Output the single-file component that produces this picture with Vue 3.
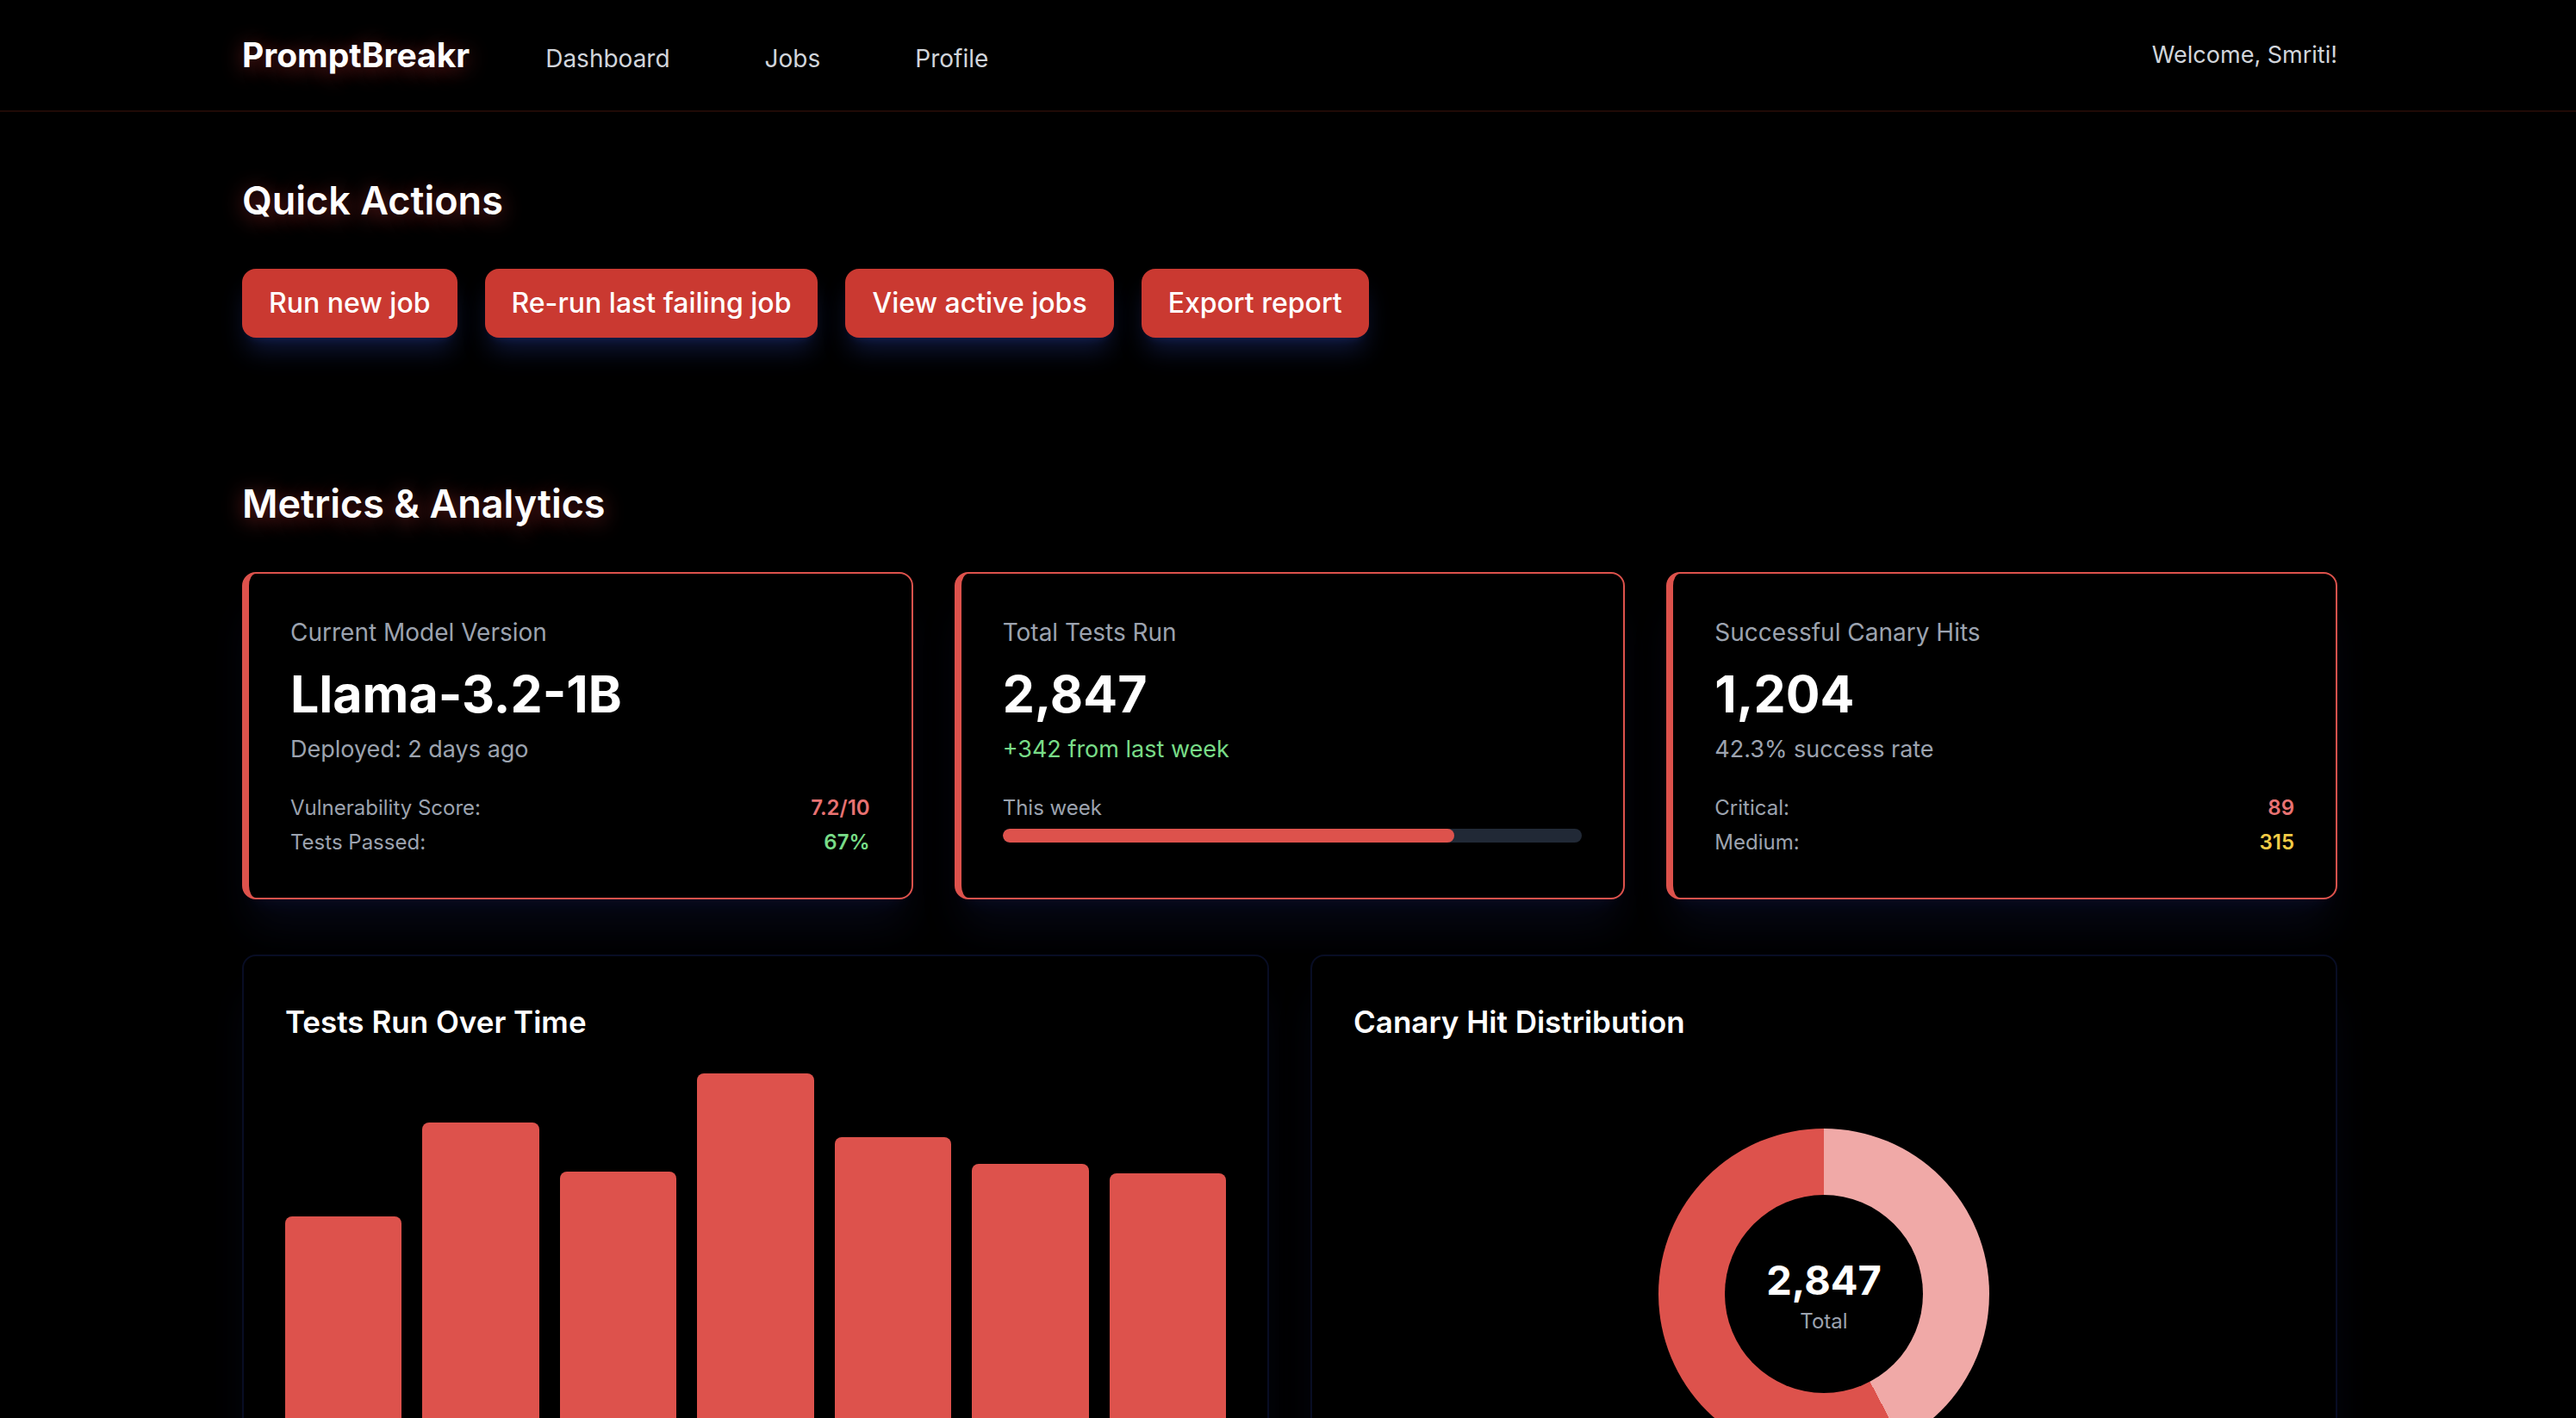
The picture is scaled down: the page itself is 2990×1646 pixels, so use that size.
<script setup>
import { ref, computed } from 'vue'

const user = ref('Smriti')

const links = [
  { label: 'Dashboard', href: '#dashboard' },
  { label: 'Jobs', href: '#jobs' },
  { label: 'Profile', href: '#profile' }
]

const actions = ['Run new job', 'Re-run last failing job', 'View active jobs', 'Export report']

const cards = ref([
  {
    title: 'Current Model Version',
    value: 'Llama-3.2-1B',
    note: 'Deployed: 2 days ago',
    rows: [
      { label: 'Vulnerability Score:', value: '7.2/10', tone: 'red' },
      { label: 'Tests Passed:', value: '67%', tone: 'green' }
    ]
  },
  {
    title: 'Total Tests Run',
    value: '2,847',
    note: '+342 from last week',
    noteTone: 'green',
    progress: 78
  },
  {
    title: 'Successful Canary Hits',
    value: '1,204',
    note: '42.3% success rate',
    rows: [
      { label: 'Critical:', value: '89', tone: 'red' },
      { label: 'Medium:', value: '315', tone: 'yellow' }
    ]
  }
])

const tests = ref([346, 455, 398, 512, 438, 407, 396])

const bars = computed(() => {
  const max = Math.max(...tests.value)
  return tests.value.map((n) => (n / max) * 100)
})

const hitRate = ref(42.3)
</script>

<template>
  <div class="page">
    <header class="topbar">
      <div class="container topbar-inner">
        <div class="topbar-left">
          <a class="brand" href="#">PromptBreakr</a>
          <nav class="links">
            <a v-for="link in links" :key="link.label" :href="link.href">{{ link.label }}</a>
          </nav>
        </div>
        <span class="welcome">Welcome, {{ user }}!</span>
      </div>
    </header>

    <main class="container content">
      <section>
        <h2 class="section-title">Quick Actions</h2>
        <div class="actions">
          <button v-for="action in actions" :key="action" type="button" class="action-btn">{{ action }}</button>
        </div>
      </section>

      <section>
        <h2 class="section-title">Metrics &amp; Analytics</h2>

        <div class="cards">
          <article v-for="card in cards" :key="card.title" class="card">
            <h3 class="card-title">{{ card.title }}</h3>
            <p class="card-value">{{ card.value }}</p>
            <p class="card-note" :class="card.noteTone">{{ card.note }}</p>

            <dl v-if="card.rows" class="rows">
              <div v-for="row in card.rows" :key="row.label" class="row">
                <dt>{{ row.label }}</dt>
                <dd :class="row.tone">{{ row.value }}</dd>
              </div>
            </dl>

            <div v-else class="rows">
              <span id="week-label" class="row">This week</span>
              <div class="track" role="progressbar" aria-labelledby="week-label" :aria-valuenow="card.progress">
                <div class="fill" :style="{ width: card.progress + '%' }"></div>
              </div>
            </div>
          </article>
        </div>

        <div class="panels">
          <article class="panel">
            <h3 class="panel-title">Tests Run Over Time</h3>
            <div class="chart bars">
              <div v-for="(height, i) in bars" :key="i" class="bar" :style="{ height: height + '%' }"></div>
            </div>
          </article>

          <article class="panel">
            <h3 class="panel-title">Canary Hit Distribution</h3>
            <div class="chart donut-wrap">
              <div class="donut" :style="{ '--hits': hitRate + '%' }">
                <div class="donut-hole">
                  <span class="donut-value">2,847</span>
                  <span class="donut-label">Total</span>
                </div>
              </div>
            </div>
          </article>
        </div>
      </section>
    </main>
  </div>
</template>

<style>
body {
  background: #000;
}
</style>

<style scoped>
.page {
  color: #fff;
  font-family: Inter, "Liberation Sans", sans-serif;
}
h2, h3, p, dl, dd {
  margin: 0;
}
.container {
  box-sizing: border-box;
  max-width: 2560px;
  margin: 0 auto;
  padding: 0 62px 0 66px;
}

.topbar {
  border-bottom: 2px solid #200a06;
}
.topbar-inner {
  display: flex;
  align-items: center;
  justify-content: space-between;
  height: 128px;
}
.topbar-left {
  display: flex;
  align-items: baseline;
  gap: 88px;
}
.brand {
  color: #fff;
  font-size: 39px;
  font-weight: 700;
  line-height: 56px;
  text-decoration: none;
  text-shadow: 0 4px 24px rgba(239, 68, 68, 0.5);
}
.links {
  display: flex;
  gap: 110px;
}
.links a {
  color: #d1d5db;
  font-size: 28px;
  line-height: 40px;
  text-decoration: none;
}
.welcome {
  color: #d1d5db;
  font-size: 27px;
  line-height: 40px;
}

.content {
  display: flex;
  flex-direction: column;
  gap: 160px;
  padding-top: 70px;
  padding-bottom: 64px;
}
.section-title {
  margin-bottom: 46px;
  font-size: 45px;
  font-weight: 600;
  line-height: 66px;
  text-shadow: 0 4px 24px rgba(239, 68, 68, 0.5);
}
.actions {
  display: flex;
  flex-wrap: wrap;
  gap: 32px;
}
.action-btn {
  padding: 16px 31px;
  border: none;
  border-radius: 16px;
  background: #ca3931;
  color: #fff;
  font-family: inherit;
  font-size: 32px;
  font-weight: 500;
  line-height: 48px;
  cursor: pointer;
  box-shadow: 0 20px 30px -6px rgba(37, 60, 150, 0.4), 0 8px 12px -8px rgba(37, 60, 150, 0.4);
}

.cards {
  display: grid;
  grid-template-columns: repeat(3, 1fr);
  gap: 48px;
}
.card {
  padding: 48px;
  border: 2px solid #dd524c;
  border-left-width: 8px;
  border-radius: 16px;
  background: #000;
  box-shadow: 0 40px 50px -10px rgba(37, 54, 140, 0.15), 0 16px 20px -12px rgba(37, 54, 140, 0.15);
}
.card-title {
  margin-bottom: 12px;
  color: #9ca3af;
  font-size: 28px;
  font-weight: 400;
  line-height: 40px;
}
.card-value {
  margin-bottom: 4px;
  font-size: 59px;
  font-weight: 700;
  line-height: 80px;
}
.card-note {
  margin-bottom: 32px;
  color: #9ca3af;
  font-size: 27px;
  line-height: 40px;
}
.rows {
  display: flex;
  flex-direction: column;
  gap: 8px;
  color: #9ca3af;
  font-size: 24px;
  line-height: 32px;
}
.row {
  display: flex;
  justify-content: space-between;
}
.row dd {
  font-weight: 600;
}
.red { color: #e87272; }
.green { color: #78dc87; }
.yellow { color: #f3cc46; }

.track {
  height: 16px;
  border-radius: 8px;
  background: #212936;
  overflow: hidden;
}
.fill {
  height: 100%;
  border-radius: 8px;
  background: #dd524c;
}

.panels {
  display: grid;
  grid-template-columns: repeat(2, 1fr);
  gap: 48px;
  margin-top: 64px;
}
.panel {
  padding: 48px;
  border: 2px solid #080d24;
  border-radius: 16px;
  background: #000;
  box-shadow: 0 40px 50px -10px rgba(37, 54, 140, 0.15);
}
.panel-title {
  margin-bottom: 32px;
  font-size: 35px;
  font-weight: 600;
  line-height: 56px;
}
.chart {
  height: 512px;
}
.bars {
  display: flex;
  align-items: flex-end;
  gap: 24px;
}
.bar {
  flex: 1;
  border-radius: 8px 8px 0 0;
  background: #dd524c;
}
.donut-wrap {
  display: flex;
  align-items: center;
  justify-content: center;
}
.donut {
  display: grid;
  place-items: center;
  width: 384px;
  height: 384px;
  border-radius: 50%;
  background: conic-gradient(#f0a9a7 var(--hits), #dd524c 0);
}
.donut-hole {
  display: flex;
  flex-direction: column;
  align-items: center;
  justify-content: center;
  width: 230px;
  height: 230px;
  border-radius: 50%;
  background: #000;
}
.donut-value {
  font-size: 47px;
  font-weight: 700;
  line-height: 64px;
}
.donut-label {
  color: #9ca3af;
  font-size: 24px;
  line-height: 32px;
}
</style>
